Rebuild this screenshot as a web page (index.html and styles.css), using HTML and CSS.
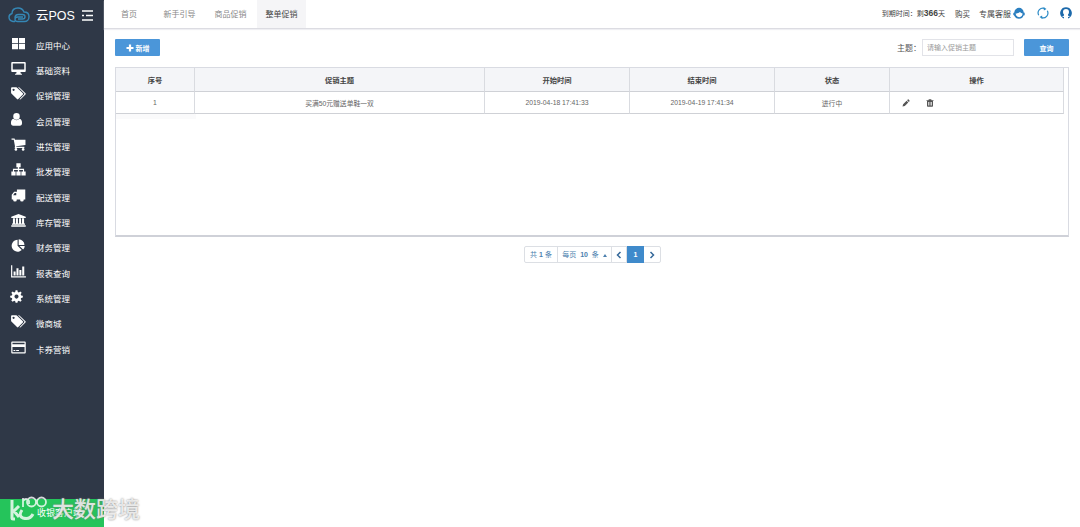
FILE: index.html
```html
<!DOCTYPE html>
<html lang="zh-CN">
<head>
  <meta charset="UTF-8">
  <title>云POS</title>
  <meta name="viewport" content="width=device-width, initial-scale=1.0">
  <link rel="stylesheet" href="styles.css">
</head>
<body>

<div class="app">
  <aside class="sidebar">
    <div class="brand">
      <svg class="brand-logo" viewBox="0 0 44 32"><path d="M14 29H10C5 28 2 25 2 20c0-4 3-6 6-7C8 6 13 2 20 2c6 0 10 3 12 8 6 0 10 4 10 9.500s-4 9.500-9 9.500H19c-3 0-5-2-5-4.500S16 20 19 20h11M14 22c0-4 3-7 7-7h8c3 0 5 2 5 4.500S32 24 29 24h-9"/></svg>
      <span class="brand-name">云POS</span>
      <svg class="brand-toggle" viewBox="0 0 11 11"><path d="M0 1h11M4 5.500h7M0 10h11M0 5.500h2"/></svg>
    </div>

    <ul class="menu">
      <li><svg viewBox="0 0 16 14"><path d="M1 1h6.500v5.600H1zM8.500 1H15v5.600H8.500zM1 7.600h6.500v5.600H1zM8.500 7.600H15v5.600H8.500z"/></svg>应用中心</li>
      <li><svg viewBox="0 0 16 14"><path fill-rule="evenodd" d="M1.200 0h13.600q1 0 1 1v8.800q0 1-1 1H10.200v1.400l1.500.6v1H4.300v-1l1.500-.6v-1.400H1.200q-1 0-1-1V1q0-1 1-1zM1.800 1.500v6.700h12.400V1.500z"/></svg>基础资料</li>
      <li><svg viewBox="0 0 16 14"><path fill-rule="evenodd" d="M0 1.400Q0 .4 1 .4h4.500q.7 0 1.300.6l5.900 5.700q.7.700 0 1.400l-4.900 4.900q-.7.700-1.400 0L.6 7.300Q0 6.700 0 6zM2.700 1.800a1.200 1.200 0 1 0 .01 0z"/><path d="M7.500.4h.9q.6 0 1.200.6l5.900 5.700q.7.700 0 1.400l-4.900 4.900q-.7.700-1.500.1l4.900-5q.6-.7 0-1.400z"/></svg>促销管理</li>
      <li><svg class="narrow" viewBox="0 0 16 14"><path d="M8 0a3.500 3.500 0 0 1 3.500 3.600A3.500 3.500 0 0 1 8 7.200a3.500 3.500 0 0 1-3.500-3.600A3.500 3.500 0 0 1 8 0zM4.600 6.300Q8 9.400 11.400 6.300 14 7 14 11q0 2.600-2.200 2.600H4.200Q2 13.600 2 11q0-4 2.600-4.700z"/></svg>会员管理</li>
      <li><svg viewBox="0 0 16 14"><path d="M.5.500h3.300l.4 1.400H15.500v5.600L5.600 8.800l-.1.700h8.800v1.300H3.900l.3-2L2.900 1.800H.5z"/><circle cx="5.200" cy="12.300" r="1.400"/><circle cx="13" cy="12.300" r="1.400"/></svg>进货管理</li>
      <li><svg viewBox="0 0 16 14"><path d="M5.700.3h4.600v4.300H8.700v1.700H14v2.800h1.700v4.300h-4.600V9.100h1.700V7.500H8.700v1.600h1.600v4.300H5.700V9.100h1.600V7.500H3.200v1.600h1.700v4.300H.3V9.100H2V6.300h5.300V4.600H5.700z"/></svg>批发管理</li>
      <li><svg viewBox="0 0 16 14"><path fill-rule="evenodd" d="M6.300.5h9v10.800H6V11.300H.7V6.200L3.300 3h3zM2.200 6.700h3.400V4.300H3.900z"/><circle cx="4.200" cy="11.500" r="2"/><circle cx="11.700" cy="11.500" r="2"/></svg>配送管理</li>
      <li><svg viewBox="0 0 16 14"><path d="M8 0l7.800 3v1.200H.2V3zM2 4.700h2.200v5.500h1V4.700h2.200v5.500h1.200V4.700h2.200v5.500h1V4.700H14v5.500h1v1.300H1v-1.300h1zM.2 12.100h15.600v1.600H.2z"/></svg>库存管理</li>
      <li><svg viewBox="0 0 16 14"><path d="M7 .8v6.500l4.500 4.500A6.400 6.400 0 1 1 7 .8z"/><path d="M8.200.3a6.200 6.200 0 0 1 6.200 6.200H8.200zM9 7.500h5.700q-.1 2.300-1.700 3.900z"/></svg>财务管理</li>
      <li><svg viewBox="0 0 16 14"><path d="M0 .3h1.300v11.800H16v1.400H0zM2.700 7h2.200v4.200H2.700zM5.800 3.500H8v7.700H5.800zM8.900 5.500h2.200v5.700H8.900zM12 1.700h2.200v9.500H12z"/></svg>报表查询</li>
      <li><svg class="narrow" viewBox="0 0 16 14"><path fill-rule="evenodd" d="M7 .3h2l.4 1.900 1.200.5 1.500-1.200 1.500 1.500-1.100 1.600.5 1.200 1.800.3v2l-1.800.4-.5 1.200 1.100 1.500-1.500 1.500-1.600-1.100-1.100.5-.4 1.600H7l-.4-1.600-1.100-.5-1.600 1.100-1.500-1.500 1.100-1.500L3 8.500l-1.800-.4v-2L3 5.800l.5-1.200L2.400 3l1.500-1.500 1.500 1.200 1.200-.5zM8 4.900a2.200 2.200 0 1 0 .01 0z"/></svg>系统管理</li>
      <li><svg viewBox="0 0 16 14"><path fill-rule="evenodd" d="M0 1.400Q0 .4 1 .4h4.500q.7 0 1.300.6l5.900 5.700q.7.700 0 1.400l-4.900 4.900q-.7.700-1.400 0L.6 7.300Q0 6.700 0 6zM2.700 1.800a1.200 1.200 0 1 0 .01 0z"/><path d="M7.500.4h.9q.6 0 1.200.6l5.900 5.700q.7.700 0 1.400l-4.900 4.900q-.7.700-1.500.1l4.900-5q.6-.7 0-1.400z"/></svg>微商城</li>
      <li><svg viewBox="0 0 16 14"><path fill-rule="evenodd" d="M1.200.6h13.600q1 0 1 1v10.800q0 1-1 1H1.200q-1 0-1-1V1.600q0-1 1-1zM1.500 1.900v1.600h13V1.900zM1.500 6.500v5.600h13V6.500zM2.600 9.800h2v1.100h-2zM5.500 9.800h3v1.100h-3z"/></svg>卡券营销</li>
    </ul>

    <div class="cashier">收银客户端</div>
  </aside>

  <main class="main">
    <header class="topbar">
      <nav class="tabs">
        <a class="tab">首页</a>
        <a class="tab">新手引导</a>
        <a class="tab">商品促销</a>
        <a class="tab active">整单促销</a>
      </nav>
      <div class="account">
        <span class="expire">到期时间：剩<b>366</b>天</span>
        <span class="buy">购买</span>
        <span class="service">专属客服</span>
        <svg class="icon-service" viewBox="0 0 12 12"><path d="M1.300 5.500a4.700 4.700 0 0 1 9.400 0l1 .3v2.400l-1.200.3Q9.500 11.800 6 11.800q-2.300 0-3.700-1.600L.9 8.300.3 8V6z" fill="#2b7fc0"/><path d="M2.600 6.600Q5.500 6.500 7 5q1 1.400 2.600 1.500 0 3-3.400 3.700l-1.400-.5Q2.700 8.800 2.600 6.600z" fill="#fff"/></svg>
        <svg class="icon-refresh" viewBox="0 0 12 12"><path d="M1.700 8.200A4.800 4.800 0 0 1 7.800 1.500M10.300 3.800A4.800 4.800 0 0 1 4.200 10.500"/><path d="M6.500 0l3 1.900-2.600 1.600zM5.500 12l-3-1.900 2.600-1.600z" class="tip"/></svg>
        <svg class="icon-user" viewBox="0 0 12 12"><path d="M6 .2a5.800 5.800 0 0 1 4.300 9.700L8 8.600V7.500q1-1 1-2.500Q9 2 6 2T3 5q0 1.500 1 2.500v1.100L1.700 9.900A5.800 5.800 0 0 1 6 .2z" fill="#1c69ab"/><path d="M1.500 9.600q.7 1.700 2.500 1.900V10zM10.500 9.600q-.7 1.700-2.500 1.900V10z" fill="#1c69ab"/></svg>
      </div>
    </header>

    <section class="content">
      <div class="toolbar">
        <button class="btn btn-add"><svg viewBox="0 0 8 8"><path d="M2.900.5h2.200v2.400h2.400v2.200H5.100v2.400H2.900V5.100H.5V2.900h2.400z"/></svg>新增</button>
        <div class="search">
          <label for="theme">主题：</label>
          <input id="theme" type="text" placeholder="请输入促销主题">
          <button class="btn btn-search">查询</button>
        </div>
      </div>

      <div class="grid">
        <table>
          <colgroup>
            <col class="col-no"><col class="col-theme"><col class="col-time"><col class="col-time"><col class="col-state"><col class="col-action">
          </colgroup>
          <thead>
            <tr><th>序号</th><th>促销主题</th><th>开始时间</th><th>结束时间</th><th>状态</th><th>操作</th></tr>
          </thead>
          <tbody>
            <tr>
              <td>1</td>
              <td>买满50元赠送单鞋一双</td>
              <td>2019-04-18 17:41:33</td>
              <td>2019-04-19 17:41:34</td>
              <td>进行中</td>
              <td>
                <div class="actions">
                  <svg viewBox="0 0 8 8"><path d="M.5 7.500l.6-2.300L4.600 1.700l1.700 1.700-3.500 3.500zM5.100 1.200l.7-.7q.4-.3.800 0l.9.900q.3.400 0 .8l-.7.700z"/></svg>
                  <svg viewBox="0 0 8 8"><path fill-rule="evenodd" d="M2.800.3h2.400l.4.900h1.900V2H7v4.900q0 .8-.8.800H1.800Q1 7.700 1 6.900V2H.5v-.8h1.900zM2.200 3v3.600h.7V3zM3.700 3v3.600h.7V3zM5.100 3v3.600h.7V3z"/></svg>
                </div>
              </td>
            </tr>
          </tbody>
        </table>
        <div class="frozen-foot"></div>
      </div>

      <div class="pager">
        <span class="pager-total">共 <b>1</b> 条</span>
        <span class="pager-size">每页 <b>10</b> 条 <i class="caret"></i></span>
        <a class="pager-arrow"><svg viewBox="0 0 6 8"><path d="M4.500 1L1.500 4l3 3"/></svg></a>
        <a class="pager-page">1</a>
        <a class="pager-arrow pager-next"><svg viewBox="0 0 6 8"><path d="M1.500 1l3 3-3 3"/></svg></a>
      </div>
    </section>
  </main>
</div>

<div class="watermark">
  <svg viewBox="0 0 38 28"><path d="M3 5v18q0 1 1 1h2M10 11l-5 5 5 6M13 15q-4 6 1 8 7 2 10-4"/><path class="thin" d="M14 12V3M14 6q3-4 6 0v3M18 7a4.500 4.500 0 1 0 9 0 4.500 4.500 0 1 0-9 0M28 7a4.500 4.500 0 1 0 9 0 4.500 4.500 0 1 0-9 0"/></svg>
  <span>大数跨境</span>
</div>

</body>
</html>
```
FILE: styles.css
```css
* {
  box-sizing: border-box;
}

body {
  margin: 0;
  font-family: "Liberation Sans", "Noto Sans CJK SC", sans-serif;
  font-size: 8px;
  color: #555;
  background: #fff;
  overflow: hidden;
}

.app {
  display: flex;
  height: 527px;
}

.sidebar {
  display: flex;
  flex-direction: column;
  width: 104px;
  background: #2f3847;
  color: #fff;
}

.brand {
  display: flex;
  align-items: center;
  height: 30px;
  padding-left: 8px;
}

.brand-logo {
  width: 22px;
  height: 16px;
  fill: none;
  stroke: #3587b5;
  stroke-width: 2.8;
}

.brand-name {
  width: 46px;
  margin: -2px 0 0 6px;
  font-size: 12.5px;
  white-space: nowrap;
}

.brand-toggle {
  width: 11px;
  height: 11px;
  fill: none;
  stroke: #fff;
  stroke-width: 1.3;
}

.menu {
  flex: 1;
  margin: 0;
  padding: 2px 0 0;
  list-style: none;
}

.menu li {
  display: flex;
  align-items: center;
  height: 25.35px;
  padding-left: 11px;
  font-size: 8.5px;
}

.menu svg {
  width: 15px;
  height: 13px;
  margin: -3px 10px 0 0;
  fill: #fff;
}

/* square icons sit a little to the left of the wide ones */
.menu .narrow {
  margin-left: -2px;
  margin-right: 12px;
}

.cashier {
  height: 28px;
  padding-left: 37px;
  background: #25c45b;
  font-size: 9px;
  line-height: 28px;
}

.main {
  flex: 1;
}

.topbar {
  display: flex;
  justify-content: space-between;
  height: 29px;
  border-bottom: 1px solid #dcdce2;
  box-shadow: 0 1px 1px #efeff3;
}

.tabs {
  display: flex;
}

.tab {
  width: 51px;
  line-height: 29px;
  text-align: center;
  color: #888;
}

.tab:first-child {
  width: 50px;
}

.tab.active {
  width: 49px;
  margin-left: 1px;
  background: #f5f5f7;
  color: #444;
}

.account {
  display: flex;
  align-items: center;
  padding: 0 8px 2px 0;
  color: #444;
}

.expire {
  font-size: 7px;
}

.expire b {
  font-size: 8.5px;
}

.buy {
  margin: 0 9px 0 10px;
  font-size: 7.5px;
}

.account svg {
  width: 12px;
  height: 12px;
}

.account .icon-service {
  margin-left: 2px;
}

.account .icon-refresh {
  margin: 0 11px 0 12px;
  fill: none;
  stroke: #2b8ac6;
  stroke-width: 1.2;
}

.account .icon-refresh .tip {
  fill: #2b8ac6;
  stroke: none;
}

.content {
  padding: 10px 11px 0;
}

.toolbar {
  display: flex;
  justify-content: space-between;
  height: 17px;
}

.btn {
  display: flex;
  align-items: center;
  justify-content: center;
  width: 45px;
  height: 17px;
  padding: 0;
  border: 0;
  border-radius: 1px;
  background: #4b96d9;
  color: #fff;
  font-family: inherit;
  font-size: 7px;
  font-weight: bold;
}

.btn svg {
  width: 8px;
  height: 8px;
  margin-right: 2px;
  fill: #fff;
}

.search {
  display: flex;
  align-items: center;
}

.search input {
  width: 92px;
  height: 17px;
  margin: 0 10px 0 1px;
  padding: 0 4px;
  border: 1px solid #e2e3e8;
  font-family: inherit;
  font-size: 7px;
}

.search input::placeholder {
  color: #999;
}

.grid {
  height: 170px;
  margin-top: 11px;
  border: 1px solid #d9dbe2;
  border-bottom: 2px solid #cfd1d8;
}

table {
  width: 948px;
  border-collapse: separate;
  border-spacing: 0;
  table-layout: fixed;
}

.col-no { width: 79px; }
.col-theme { width: 290px; }
.col-time { width: 145px; }
.col-state { width: 115px; }
.col-action { width: 174px; }

th,
td {
  padding: 0;
  border-right: 1px solid #d9dbe0;
  border-bottom: 1px solid #cfd1d6;
  text-align: center;
}

th {
  height: 24px;
  background: #f4f5f8;
  color: #444;
  font-size: 7.3px;
}

td {
  height: 22px;
  color: #666;
  font-size: 6.8px;
}

.actions {
  display: flex;
  gap: 16px;
  padding-left: 12px;
}

.actions svg {
  width: 8px;
  height: 8px;
  fill: #555;
}

.frozen-foot {
  width: 80px;
  height: 5px;
  background: #fafafb;
}

.pager {
  display: flex;
  width: 137px;
  height: 17px;
  margin: 9px 0 0 409px;
  border: 1px solid #dcdfe4;
  border-radius: 2px;
  color: #4b7fae;
  font-size: 7px;
  line-height: 15px;
  text-align: center;
}

.pager > * {
  border-right: 1px solid #dcdfe4;
}

.pager-total {
  width: 33px;
}

.pager-size {
  width: 54px;
  word-spacing: 2px;
}

.caret {
  display: inline-block;
  border: 2px solid transparent;
  border-top: 0;
  border-bottom: 3px solid #4b7fae;
}

.pager-arrow {
  display: flex;
  align-items: center;
  justify-content: center;
  width: 15px;
}

.pager-arrow svg {
  width: 6px;
  height: 8px;
  fill: none;
  stroke: #35699a;
  stroke-width: 1.5;
}

.pager-page {
  width: 17px;
  height: 17px;
  margin-top: -1px;
  border: 0;
  background: #3f8acb;
  color: #fff;
  font-weight: bold;
  line-height: 17px;
}

.pager-next {
  border-right: 0;
}

/* overlaid on the bottom left corner of the page */
.watermark {
  position: absolute;
  left: 8px;
  bottom: 4px;
  display: flex;
  align-items: center;
  height: 28px;
  color: rgba(255, 255, 255, 0.8);
  font-size: 22px;
  font-weight: 500;
  text-shadow: 0 0 2px #777;
}

.watermark svg {
  width: 40px;
  height: 28px;
  margin-right: 4px;
  fill: none;
  stroke: rgba(255, 255, 255, 0.8);
  stroke-width: 3;
}

.watermark .thin {
  stroke-width: 1.8;
}

.watermark span {
  margin-top: -5px;
}
```
